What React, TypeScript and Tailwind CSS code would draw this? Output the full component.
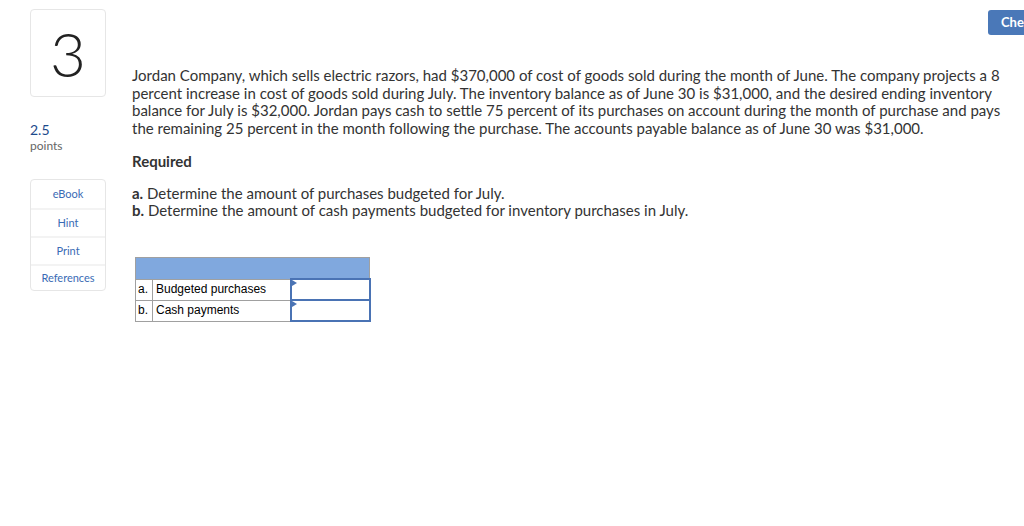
import React from "react";

const tools = [
  { label: "eBook", h: "h-[28px]" },
  { label: "Hint", h: "h-[28px]" },
  { label: "Print", h: "h-[28px]" },
  { label: "References", h: "h-[26px]" },
];

const rows = [
  { key: "a.", label: "Budgeted purchases" },
  { key: "b.", label: "Cash payments" },
];

function InputCell() {
  return (
    <td className="relative h-[21px] w-[79px] border-2 border-[#4a73b4] p-0 bg-white">
      <span className="absolute left-0 top-0 h-0 w-0 border-y-[3px] border-l-[5px] border-y-transparent border-l-[#4a73b4]" />
    </td>
  );
}

export default function App() {
  return (
    <div className="relative h-[526px] w-[1024px] overflow-hidden bg-white font-['Lato',sans-serif] text-[#333]">
      <button className="absolute left-[988px] top-[10px] h-[25px] w-[60px] rounded-[3px] bg-[#4a78b8] pl-[13px] text-left text-[13px] font-bold text-white">
        Check
      </button>

      <div className="flex pl-[30px] pt-[9px]">
        <div className="flex w-[76px] shrink-0 flex-col">
          <div className="flex h-[88px] items-center justify-center rounded-[4px] border border-[#e6e6e6] text-[62px] leading-none font-light text-[#222]">
            3
          </div>
          <div className="mt-[24px] text-[14px] leading-[17px] text-[#1d4a8c]">2.5</div>
          <div className="text-[12px] leading-[15px] text-[#666]">points</div>
          <div className="mt-[26px] flex flex-col rounded-[4px] border border-[#e6e6e6]">
            {tools.map((t, i) => (
              <div
                key={t.label}
                className={`flex ${t.h} items-center justify-center text-[11px] text-[#3a6bb5] ${
                  i > 0 ? "border-t-2 border-[#f3f3f3]" : ""
                }`}
              >
                {t.label}
              </div>
            ))}
          </div>
        </div>

        <div className="ml-[26px] mt-[58px] w-[875px] text-[15px] leading-[17.7px]">
          <p>
            Jordan Company, which sells electric razors, had $370,000 of cost of goods sold during the month of June. The company projects a 8 percent increase in cost of goods sold during July. The inventory balance as of June 30 is $31,000, and the desired ending inventory balance for July is $32,000. Jordan pays cash to settle 75 percent of its purchases on account during the month of purchase and pays the remaining 25 percent in the month following the purchase. The accounts payable balance as of June 30 was $31,000.
          </p>
          <p className="mt-[15px] font-bold">Required</p>
          <div className="mt-[14px]">
            <p>
              <span className="font-bold">a.</span> Determine the amount of purchases budgeted for July.
            </p>
            <p>
              <span className="font-bold">b.</span> Determine the amount of cash payments budgeted for inventory purchases in July.
            </p>
          </div>

          <table className="ml-[3px] mt-[37px] border-collapse font-['Liberation_Sans',sans-serif] text-[12px] text-black">
            <tbody>
              <tr>
                <td colSpan={3} className="h-[22px] border border-[#a0a0a0] bg-[#80a8de]" />
              </tr>
              {rows.map((r) => (
                <tr key={r.key}>
                  <td className="h-[21px] w-[17px] border border-[#a0a0a0] px-[2px]">{r.key}</td>
                  <td className="w-[138px] border border-[#a0a0a0] px-[3px]">{r.label}</td>
                  <InputCell />
                </tr>
              ))}
            </tbody>
          </table>
        </div>
      </div>
    </div>
  );
}
